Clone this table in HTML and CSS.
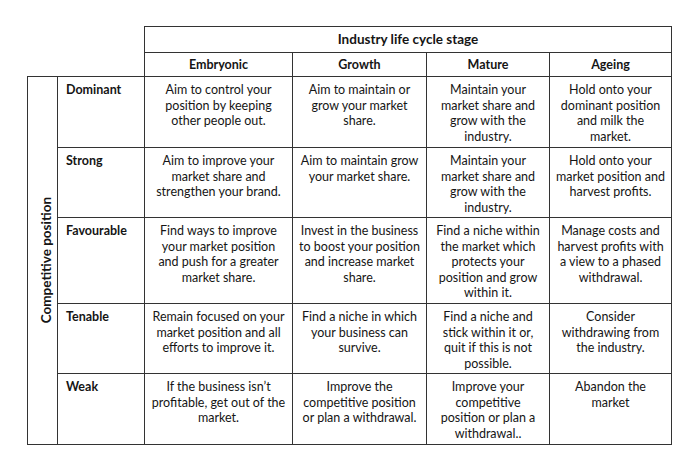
FILE: index.html
```html
<!DOCTYPE html>
<html lang="en">
<head>
    <meta charset="UTF-8">
    <meta name="viewport" content="width=device-width, initial-scale=1.0">
    <title>Industry life cycle stage</title>
    <link rel="stylesheet" href="styles.css">
</head>
<body>
    <main>
        <table class="matriz">
            <colgroup>
                <col class="c-eje">
                <col class="c-pos">
                <col class="c-emb">
                <col class="c-gro">
                <col class="c-mat">
                <col class="c-age">
            </colgroup>
            <tr class="f-titulo">
                <td class="vacio" colspan="2"></td>
                <th colspan="4">Industry life cycle stage</th>
            </tr>
            <tr class="f-etapas">
                <td class="vacio" colspan="2"></td>
                <th>Embryonic</th>
                <th>Growth</th>
                <th>Mature</th>
                <th>Ageing</th>
            </tr>
            <tr class="f-dominant">
                <td class="eje" rowspan="5"><span>Competitive position</span></td>
                <th class="pos">Dominant</th>
                <td>Aim to control your<br>position by keeping<br>other people out.</td>
                <td>Aim to maintain or<br>grow your market<br>share.</td>
                <td>Maintain your<br>market share and<br>grow with the<br>industry.</td>
                <td>Hold onto your<br>dominant position<br>and milk the<br>market.</td>
            </tr>
            <tr class="f-strong">
                <th class="pos">Strong</th>
                <td>Aim to improve your<br>market share and<br>strengthen your brand.</td>
                <td>Aim to maintain grow<br>your market share.</td>
                <td>Maintain your<br>market share and<br>grow with the<br>industry.</td>
                <td>Hold onto your<br>market position and<br>harvest profits.</td>
            </tr>
            <tr class="f-favourable">
                <th class="pos">Favourable</th>
                <td>Find ways to improve<br>your market position<br>and push for a greater<br>market share.</td>
                <td>Invest in the business<br>to boost your position<br>and increase market<br>share.</td>
                <td>Find a niche within<br>the market which<br>protects your<br>position and grow<br>within it.</td>
                <td>Manage costs and<br>harvest profits with<br>a view to a phased<br>withdrawal.</td>
            </tr>
            <tr class="f-tenable">
                <th class="pos">Tenable</th>
                <td>Remain focused on your<br>market position and all<br>efforts to improve it.</td>
                <td>Find a niche in which<br>your business can<br>survive.</td>
                <td>Find a niche and<br>stick within it or,<br>quit if this is not<br>possible.</td>
                <td>Consider<br>withdrawing from<br>the industry.</td>
            </tr>
            <tr class="f-weak">
                <th class="pos">Weak</th>
                <td>If the business isn’t<br>profitable, get out of the<br>market.</td>
                <td>Improve the<br>competitive position<br>or plan a withdrawal.</td>
                <td>Improve your<br>competitive<br>position or plan a<br>withdrawal..</td>
                <td>Abandon the<br>market</td>
            </tr>
        </table>
    </main>
</body>
</html>
```

FILE: styles.css
```css
body {
    margin: 0;
    background-color: #ffffff;
    font-family: Lato, "Open Sans", sans-serif;
    color: #151515;
}

main {
    padding: 26px 0 0 27px;
}

.matriz {
    border-collapse: collapse;
    table-layout: fixed;
    width: 644px;
    font-size: 12.5px;
    line-height: 15.5px;
}

.c-eje { width: 30px; }
.c-pos { width: 87px; }
.c-emb { width: 148px; }
.c-gro { width: 134px; }
.c-mat { width: 123px; }
.c-age { width: 122px; }

.matriz th,
.matriz td {
    border: 1px solid #333;
    padding: 0;
    text-align: center;
    vertical-align: top;
}

.matriz th {
    font-weight: bold;
}

/* esquina superior izquierda sin bordes */
.f-titulo td.vacio {
    border: none;
}

.f-etapas td.vacio {
    border-top: none;
    border-left: none;
}

.f-titulo { height: 26px; }
.f-titulo th {
    vertical-align: middle;
    font-size: 13.5px;
}

.f-etapas { height: 24px; }
.f-etapas th {
    vertical-align: middle;
}

.f-dominant { height: 71px; }
.f-strong { height: 70px; }
.f-favourable { height: 86px; }
.f-tenable { height: 70px; }
.f-weak { height: 71px; }

.f-dominant td,
.f-strong td,
.f-favourable td,
.f-tenable td,
.f-weak td,
.matriz th.pos {
    padding-top: 5px;
}

.matriz th.pos {
    text-align: left;
    padding-left: 8px;
}

/* texto vertical del eje */
.matriz td.eje {
    vertical-align: middle;
    padding: 0 0 0 8px;
}

.eje span {
    display: block;
    writing-mode: vertical-rl;
    transform: rotate(180deg);
    margin: 0 auto;
    font-weight: bold;
    font-size: 13.5px;
    white-space: nowrap;
}
```
